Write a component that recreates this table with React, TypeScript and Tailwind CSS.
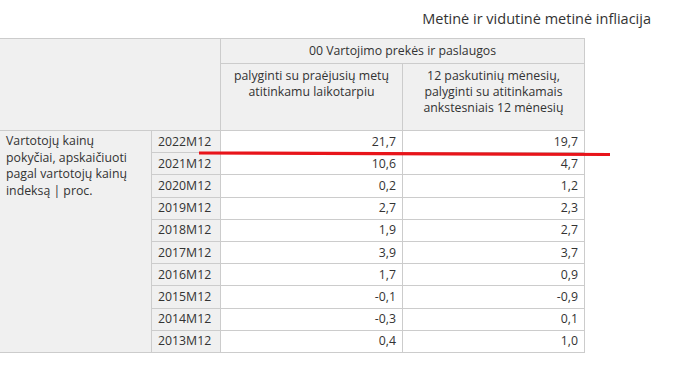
import React from 'react';

const rows = [
  { period: '2022M12', a: '21,7', b: '19,7' },
  { period: '2021M12', a: '10,6', b: '4,7' },
  { period: '2020M12', a: '0,2', b: '1,2' },
  { period: '2019M12', a: '2,7', b: '2,3' },
  { period: '2018M12', a: '1,9', b: '2,7' },
  { period: '2017M12', a: '3,9', b: '3,7' },
  { period: '2016M12', a: '1,7', b: '0,9' },
  { period: '2015M12', a: '-0,1', b: '-0,9' },
  { period: '2014M12', a: '-0,3', b: '0,1' },
  { period: '2013M12', a: '0,4', b: '1,0' },
];

export default function App() {
  return (
    <div
      className="relative w-[688px] h-[367px] bg-white text-[#333] overflow-hidden"
      style={{ fontFamily: '"Open Sans", "Noto Sans", sans-serif' }}
    >
      <div className="h-[38px] pr-[37px] flex justify-end items-center text-[14.5px] pb-[1px]">
        Metinė ir vidutinė metinė infliacija
      </div>

      <table className="border-collapse table-fixed w-[585px] -ml-[1px] text-[12.3px] leading-[16px]">
        <colgroup>
          <col className="w-[152px]" />
          <col className="w-[69px]" />
          <col className="w-[182px]" />
          <col className="w-[182px]" />
        </colgroup>
        <thead>
          <tr className="h-[25px]">
            <th colSpan={2} rowSpan={2} className="bg-[#f0f0f0] border border-[#cccccc]" />
            <th colSpan={2} className="bg-[#f0f0f0] border border-[#cccccc] font-normal text-center align-middle">
              00 Vartojimo prekės ir paslaugos
            </th>
          </tr>
          <tr className="h-[67px]">
            <th className="bg-[#f0f0f0] border border-[#cccccc] font-normal text-center align-top pt-[4px] px-2">
              palyginti su praėjusių metų
              <br />
              atitinkamu laikotarpiu
            </th>
            <th className="bg-[#f0f0f0] border border-[#cccccc] font-normal text-center align-top pt-[4px] px-2">
              12 paskutinių mėnesių,
              <br />
              palyginti su atitinkamais
              <br />
              ankstesniais 12 mėnesių
            </th>
          </tr>
        </thead>
        <tbody>
          {rows.map((r, i) => (
            <tr key={r.period} className="h-[22.2px]">
              {i === 0 && (
                <td
                  rowSpan={rows.length}
                  className="bg-[#f0f0f0] border border-[#cccccc] align-top pl-[6px] pr-[4px] pt-[2px] leading-[16.5px] whitespace-nowrap"
                >
                  Vartotojų kainų
                  <br />
                  pokyčiai, apskaičiuoti
                  <br />
                  pagal vartotojų kainų
                  <br />
                  indeksą | proc.
                </td>
              )}
              <td className="bg-[#f0f0f0] border border-[#cccccc] pl-[6px] align-middle">{r.period}</td>
              <td className="border border-[#cccccc] text-right pr-[6px] align-middle">{r.a}</td>
              <td className="border border-[#cccccc] text-right pr-[6px] align-middle">{r.b}</td>
            </tr>
          ))}
        </tbody>
      </table>

      <svg className="absolute left-0 top-0 pointer-events-none" width="688" height="367">
        <line x1="199" y1="153" x2="610" y2="154.5" stroke="#e8141a" strokeWidth="3.2" />
      </svg>
    </div>
  );
}
